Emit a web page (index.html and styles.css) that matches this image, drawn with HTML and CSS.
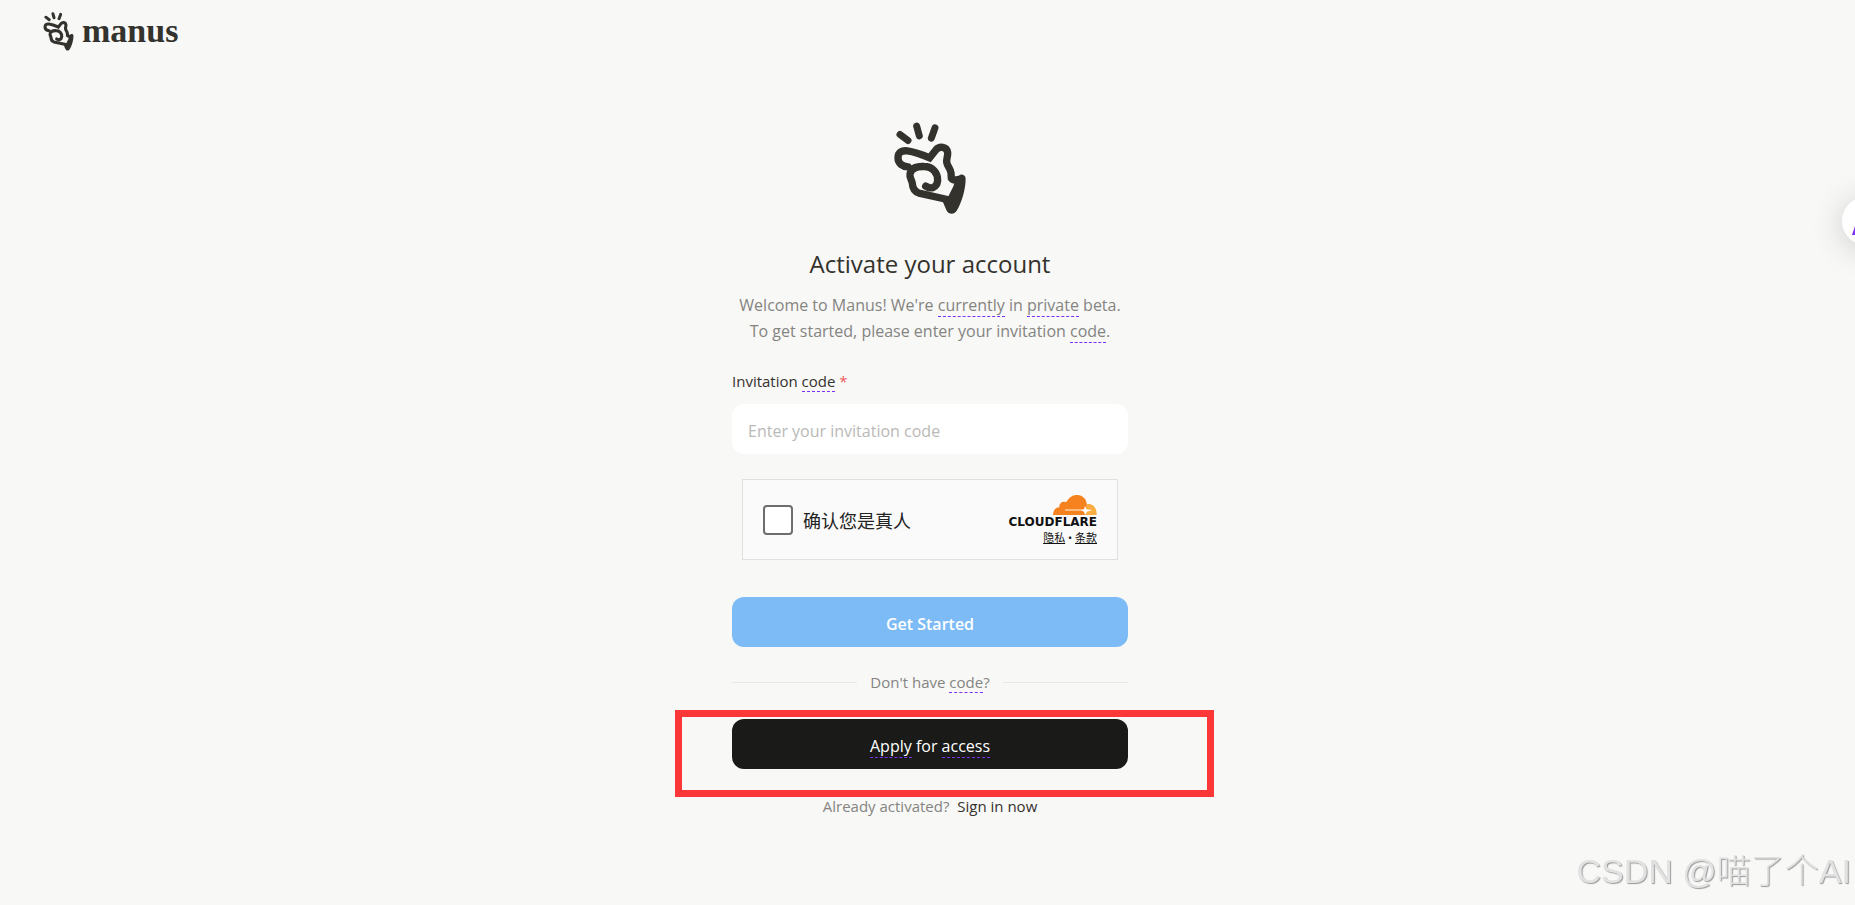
FILE: index.html
```
<!DOCTYPE html>
<html lang="en">
<head>
    <meta charset="UTF-8">
    <meta name="viewport" content="width=device-width, initial-scale=1.0">
    <title>Activate your account - Manus</title>
    <link rel="stylesheet" href="styles.css">
</head>
<body>
    <svg class="sprite" aria-hidden="true">
        <symbol id="hand" viewBox="68 36 216 278">
            <g fill="none" stroke="#34322d" stroke-linecap="round" stroke-linejoin="round">
                <path stroke-width="21" d="M86 73L110 91M136 48L144 77M191 53L180 84"/>
                <path stroke-width="22" stroke-linejoin="miter" d="M110 170C93 169 80 160 80 143C80 127 91 120 108 122C132 125 152 133 175 143L194 119C205 107 226 109 229 127C230 139 225 145 226 156C228 169 238 175 239 188L240 204C244 210 252 210 260 208"/>
                <path stroke-width="22" d="M163 228C178 238 196 234 199 212C200 188 184 169 158 169C136 168 119 174 116 192C114 203 122 209 123 220C124 237 132 245 143 249L228 268"/>
            </g>
            <path fill="#34322d" d="M242 216C256 216 258 205 263 196C270 190 282 194 283 205C283 236 272 276 256 302C249 314 232 314 226 302L215 276L230 262C236 246 248 230 249 217Z"/>
        </symbol>
    </svg>

    <header class="header">
        <a class="brand" href="#">
            <svg class="brand-icon" aria-hidden="true"><use href="#hand"/></svg>
            manus
        </a>
    </header>

    <main class="container">
        <form class="activate-form" id="activateForm">
            <svg class="logo" aria-hidden="true"><use href="#hand"/></svg>
            <h1>Activate your account</h1>
            <p class="intro">Welcome to Manus! We're <span class="word">currently</span> in <span class="word">private</span> beta.<br>To get started, please enter your invitation <span class="word">code</span>.</p>

            <label class="field-label" for="inviteCode">Invitation <span class="word">code</span> <span class="required">*</span></label>
            <input type="text" id="inviteCode" name="inviteCode" placeholder="Enter your invitation code">

            <div class="captcha">
                <label class="captcha-check" for="human">
                    <input type="checkbox" id="human" name="human">
                    确认您是真人
                </label>
                <div class="captcha-brand">
                    <svg class="cloud" viewBox="0 0 132 60" aria-hidden="true">
                        <path fill="#fbad41" d="M96 60L102 28C118 24 132 38 131 60Z"/>
                        <path fill="#f6821f" d="M0 60C0 46 8 37 19 37C18 25 27 17 40 21C49 5 61 0 73 0C91 1 104 15 101 35L96 60Z"/>
                        <path fill="#fdd9b5" d="M36 43H90V47H36Z"/>
                        <path fill="#fff" d="M96 32L100 43L118 45L102 50L96 60L93 50L84 46L93 43Z"/>
                    </svg>
                    <span class="cloud-name">CLOUDFLARE</span>
                    <span class="captcha-links"><a href="#">隐私</a> • <a href="#">条款</a></span>
                </div>
            </div>

            <button type="submit" class="btn btn-primary">Get Started</button>

            <div class="divider"><span>Don't have <span class="word">code</span>?</span></div>

            <div class="apply">
                <button type="button" class="btn btn-dark"><span class="word">Apply</span> for <span class="word">access</span></button>
                <div class="highlight"></div>
            </div>

            <p class="signin">Already activated? <a href="#">Sign in now</a></p>
        </form>
    </main>

    <button type="button" class="assistant" aria-label="Assistant">A</button>
    <div class="watermark">CSDN @喵了个AI</div>
</body>
</html>
```

FILE: styles.css
```
/* Common styles */
* {
    box-sizing: border-box;
}

body {
    font-family: 'Open Sans', 'Noto Sans CJK SC', sans-serif;
    margin: 0;
    min-height: 100vh;
    background-color: #f8f8f7;
    color: #34322d;
    overflow-x: hidden;
}

.sprite {
    position: absolute;
    width: 0;
    height: 0;
}

.word {
    border-bottom: 1px dashed #7b2ff7;
}

/* Header */
.header {
    display: flex;
    align-items: center;
    height: 62px;
    padding: 0 43px;
}

.brand {
    display: flex;
    align-items: center;
    gap: 8px;
    font: bold 34px/32px 'Liberation Serif', serif;
    color: #34322d;
    text-decoration: none;
}

.brand-icon {
    width: 31px;
    height: 39px;
}

/* Form */
.container {
    display: flex;
    justify-content: center;
    padding: 60px 0 40px 5px;
}

.activate-form {
    display: flex;
    flex-direction: column;
    width: 396px;
}

.logo {
    width: 72px;
    height: 93px;
    margin: 0 auto;
}

h1 {
    margin: 33px 0 12px;
    font-size: 24px;
    line-height: 32px;
    font-weight: normal;
    text-align: center;
}

.intro {
    margin: 0;
    font-size: 16px;
    line-height: 26px;
    text-align: center;
    white-space: nowrap;
    color: #858481;
}

.field-label {
    margin: 27px 0 13px;
    font-size: 15px;
    line-height: 20px;
}

.required {
    color: #f25a5a;
}

input[type="text"] {
    width: 100%;
    height: 50px;
    padding: 3px 16px 0;
    border: none;
    border-radius: 12px;
    background-color: #fff;
    font-family: inherit;
    font-size: 16px;
    color: #34322d;
}

input[type="text"]::placeholder {
    color: #b9b9b7;
}

/* Captcha box */
.captcha {
    display: flex;
    align-items: center;
    justify-content: space-between;
    height: 81px;
    margin: 25px 10px 37px;
    padding: 0 20px;
    border: 1px solid #e0e0e0;
    background-color: #fafafa;
}

.captcha-check {
    display: flex;
    align-items: center;
    gap: 10px;
    font-size: 18px;
    color: #232323;
}

input[type="checkbox"] {
    appearance: none;
    width: 30px;
    height: 30px;
    margin: 0;
    border: 2px solid #6d6d6d;
    border-radius: 4px;
    background-color: #fff;
}

.captcha-brand {
    display: flex;
    flex-direction: column;
    align-items: flex-end;
    color: #111;
}

.cloud {
    width: 44px;
    height: 20px;
}

.cloud-name {
    font: bold 12px/15px 'DejaVu Sans', sans-serif;
}

.captcha-links {
    font-size: 11px;
    line-height: 15px;
}

.captcha-links a {
    color: #111;
}

/* Buttons */
.btn {
    width: 100%;
    height: 50px;
    padding: 4px 0 0;
    border: none;
    border-radius: 12px;
    font-family: inherit;
    font-size: 16px;
    color: #fff;
    cursor: pointer;
}

.btn-primary {
    background-color: #7cbbf5;
    font-weight: 600;
}

.btn-dark {
    background-color: #1a1a18;
}

.divider {
    display: flex;
    align-items: center;
    gap: 13px;
    margin: 25px 0 27px;
    font-size: 15px;
    line-height: 20px;
    color: #858481;
}

.divider::before,
.divider::after {
    content: "";
    flex: 1;
    height: 1px;
    background-color: #e8e8e6;
}

.apply {
    position: relative;
}

/* Red frame drawn over the apply button */
.highlight {
    position: absolute;
    top: -9px;
    right: -86px;
    bottom: -28px;
    left: -57px;
    border: 7px solid #fb3737;
    pointer-events: none;
}

.signin {
    margin: 27px 0 0;
    font-size: 15px;
    line-height: 20px;
    text-align: center;
    color: #858481;
}

.signin a {
    margin-left: 4px;
    color: #34322d;
    text-decoration: none;
}

/* Floating items */
.assistant {
    position: fixed;
    top: 197px;
    right: -35px;
    width: 48px;
    height: 48px;
    padding: 0;
    border: none;
    border-radius: 50%;
    background-color: #fff;
    box-shadow: 0 4px 32px rgba(0, 0, 0, 0.18);
    font: bold 40px/44px Inter, sans-serif;
    color: #7b2ff7;
}

.watermark {
    position: fixed;
    right: 4px;
    bottom: 10px;
    font: 300 34px/48px 'Liberation Sans', 'Noto Sans CJK SC', sans-serif;
    color: #e2e2e2;
    text-shadow: 1px 1px 1px #999;
}
```
